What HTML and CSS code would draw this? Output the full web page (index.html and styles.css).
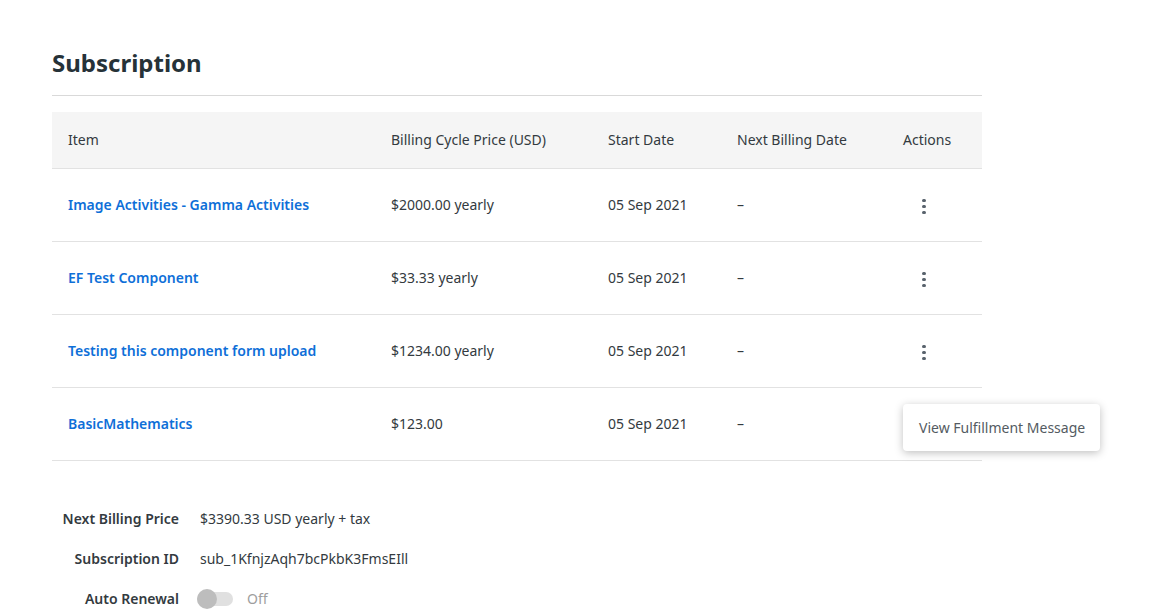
FILE: index.html
```html
<!DOCTYPE html>
<html>
<head>
<meta charset="utf-8">
<link rel="stylesheet" href="styles.css">
</head>
<body>
<main class="page">
  <h1 class="title">Subscription</h1>
  <table class="subs">
    <thead>
      <tr>
        <th class="c-item">Item</th>
        <th class="c-price">Billing Cycle Price (USD)</th>
        <th class="c-start">Start Date</th>
        <th class="c-next">Next Billing Date</th>
        <th class="c-act">Actions</th>
      </tr>
    </thead>
    <tbody>
      <tr>
        <td><a class="item-link" href="#">Image Activities - Gamma Activities</a></td>
        <td>$2000.00 yearly</td>
        <td>05 Sep 2021</td>
        <td>–</td>
        <td class="c-act"><span class="kebab"><i></i><i></i><i></i></span></td>
      </tr>
      <tr>
        <td><a class="item-link" href="#">EF Test Component</a></td>
        <td>$33.33 yearly</td>
        <td>05 Sep 2021</td>
        <td>–</td>
        <td class="c-act"><span class="kebab"><i></i><i></i><i></i></span></td>
      </tr>
      <tr>
        <td><a class="item-link" href="#">Testing this component form upload</a></td>
        <td>$1234.00 yearly</td>
        <td>05 Sep 2021</td>
        <td>–</td>
        <td class="c-act"><span class="kebab"><i></i><i></i><i></i></span></td>
      </tr>
      <tr>
        <td><a class="item-link" href="#">BasicMathematics</a></td>
        <td>$123.00</td>
        <td>05 Sep 2021</td>
        <td>–</td>
        <td class="c-act menu-cell">
          <div class="menu">View Fulfillment Message</div>
        </td>
      </tr>
    </tbody>
  </table>

  <dl class="details">
    <dt>Next Billing Price</dt>
    <dd>$3390.33 USD yearly + tax</dd>
    <dt>Subscription ID</dt>
    <dd>sub_1KfnjzAqh7bcPkbK3FmsEIll</dd>
    <dt>Auto Renewal</dt>
    <dd class="toggle-row"><span class="toggle"><span class="knob"></span></span><span class="off">Off</span></dd>
  </dl>
</main>
</body>
</html>
```

FILE: styles.css
```css
* { box-sizing: border-box; }
html, body { margin: 0; padding: 0; background: #fff; }
body {
  font-family: "Noto Sans", "Open Sans", sans-serif;
  font-size: 14px;
  color: #333a40;
}
.page {
  width: 982px;
  padding: 40px 0 0 52px;
}
.title {
  margin: 0;
  font-size: 24px;
  line-height: 46px;
  font-weight: 700;
  color: #263238;
  padding-bottom: 9px;
  border-bottom: 1px solid #d9d9d9;
}
.subs {
  width: 100%;
  margin-top: 16px;
  border-collapse: collapse;
  table-layout: fixed;
}
.subs th {
  background: #f5f5f5;
  height: 56px;
  font-weight: 400;
  text-align: left;
  padding: 0 16px;
  color: #333a40;
  border-bottom: 1px solid #e2e2e2;
}
.subs td {
  height: 73px;
  padding: 0 16px;
  border-bottom: 1px solid #e2e2e2;
  color: #333a40;
}
.c-item { width: 323px; }
.c-price { width: 217px; }
.c-start { width: 129px; }
.c-next { width: 166px; }
.subs .c-act { text-align: left; }
.item-link {
  color: #0e6fd8;
  font-weight: 600;
  text-decoration: none;
}
.kebab {
  display: inline-flex;
  flex-direction: column;
  gap: 3px;
  margin-left: 19px;
  vertical-align: middle;
}
.kebab i {
  display: block;
  width: 4px;
  height: 3px;
  border-radius: 1.5px;
  background: #58626c;
}
.menu-cell { position: relative; }
.menu {
  position: absolute;
  left: 16px;
  top: 16px;
  width: 197px;
  height: 47px;
  background: #fff;
  border-radius: 4px;
  box-shadow: 0 2px 8px rgba(0,0,0,0.25);
  padding: 0 16px;
  line-height: 48px;
  color: #545b62;
  white-space: nowrap;
  z-index: 2;
}
.details {
  margin: 48px 0 0 0;
  display: grid;
  grid-template-columns: 127px auto;
  column-gap: 21px;
  row-gap: 20px;
  line-height: 20px;
}
.details dt {
  text-align: right;
  font-weight: 600;
  color: #333a40;
}
.details dd { margin: 0; color: #333a40; }
.toggle-row { display: flex; align-items: center; gap: 14px; }
.toggle {
  position: relative;
  width: 36px;
  height: 14px;
  border-radius: 7px;
  background: #e0e0e0;
  margin-left: -3px;
}
.knob {
  position: absolute;
  left: 0;
  top: -3px;
  width: 20px;
  height: 20px;
  border-radius: 50%;
  background: #bdbdbd;
}
.off { color: #9e9e9e; }
```
